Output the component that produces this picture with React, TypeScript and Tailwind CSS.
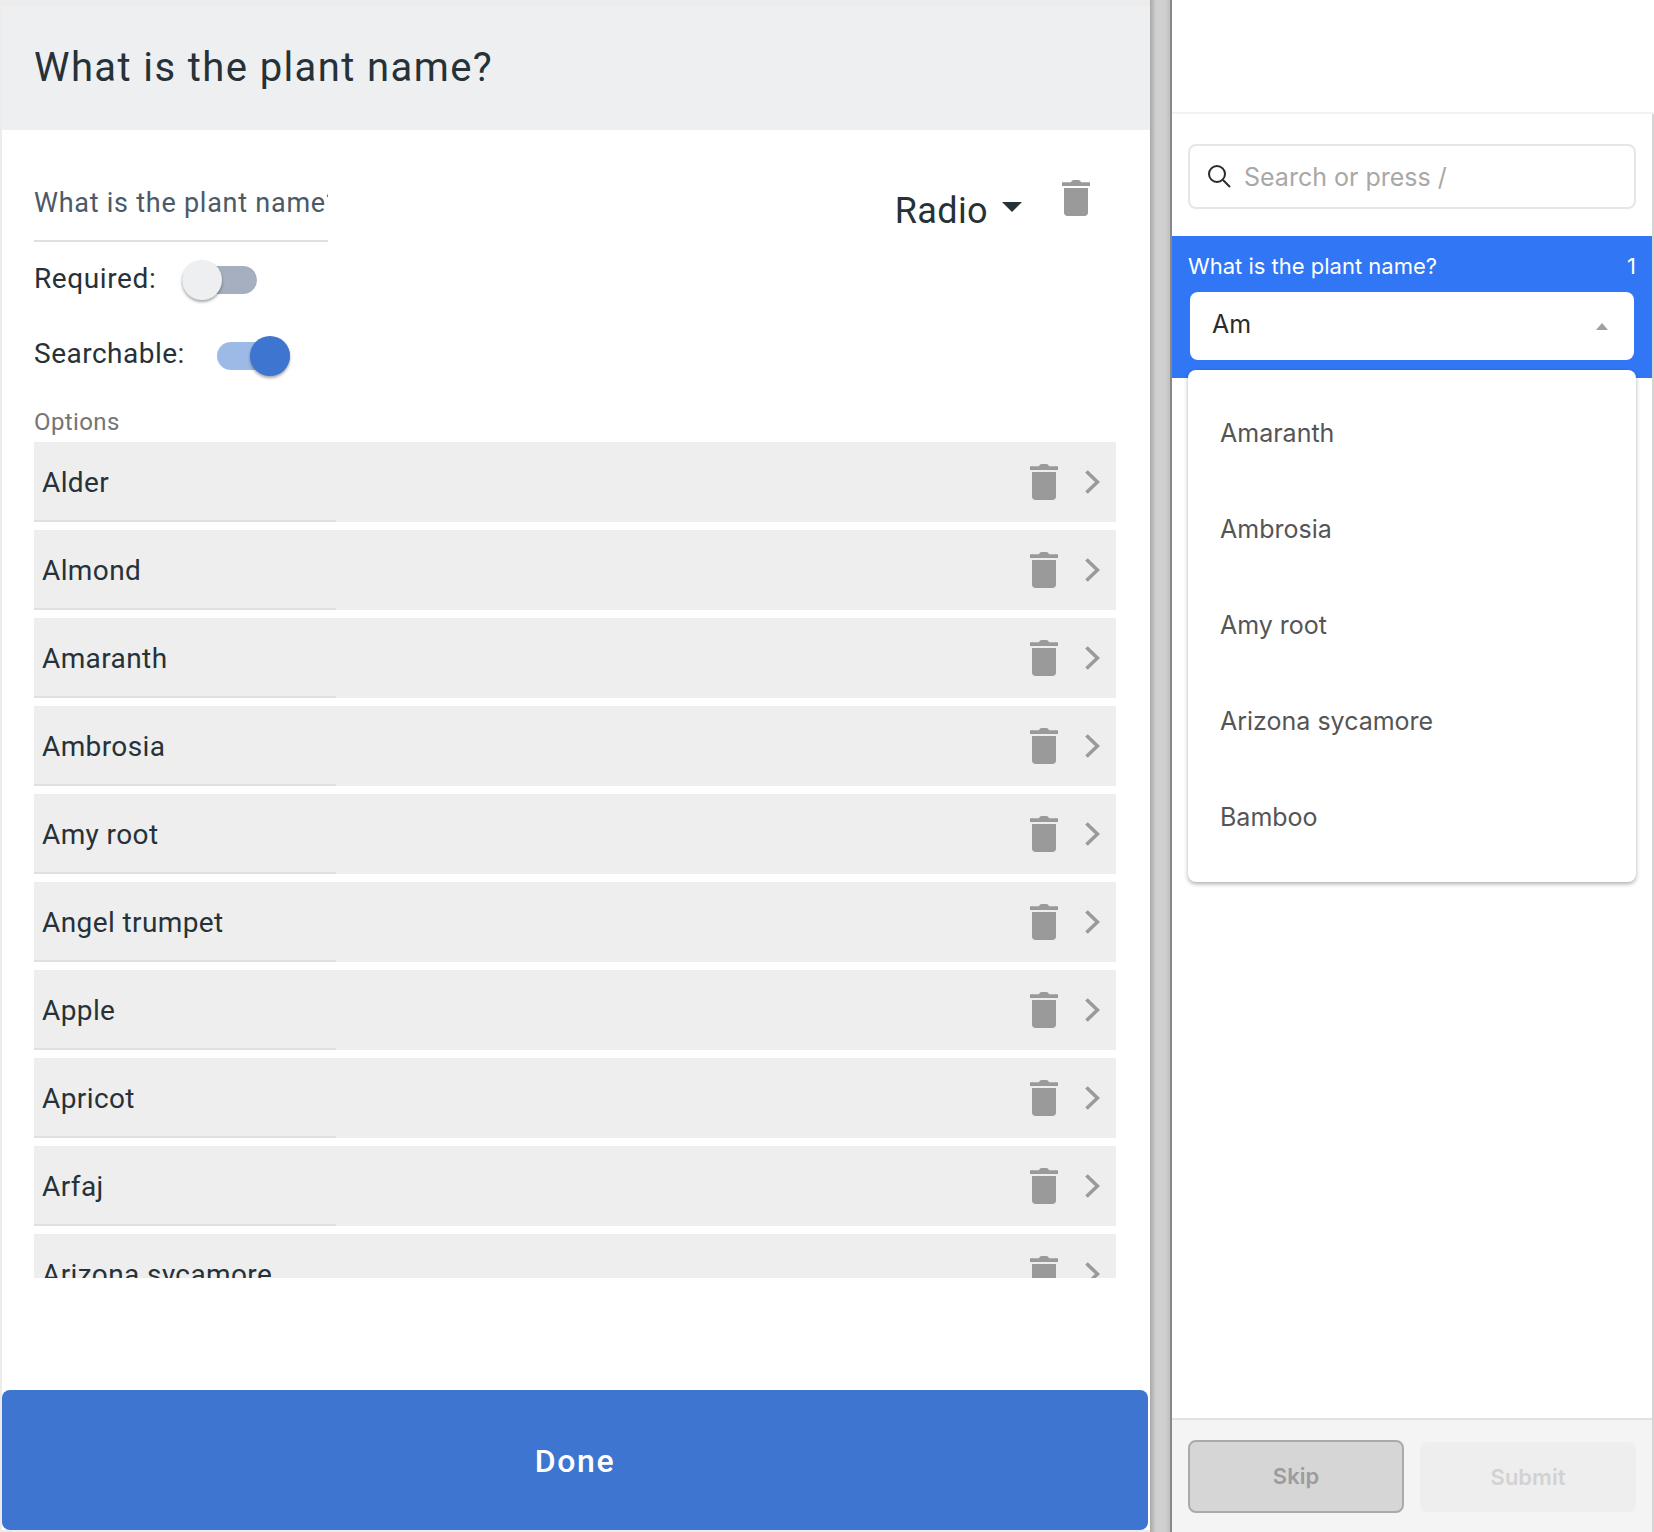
const PLEX = "font-['Roboto',sans-serif]"

const OPTIONS = [
  'Alder',
  'Almond',
  'Amaranth',
  'Ambrosia',
  'Amy root',
  'Angel trumpet',
  'Apple',
  'Apricot',
  'Arfaj',
  'Arizona sycamore',
]

const MATCHES = ['Amaranth', 'Ambrosia', 'Amy root', 'Arizona sycamore', 'Bamboo']

function Trash({ className }: { className: string }) {
  return (
    <svg viewBox="0 0 28 36" className={className} fill="#9a9a9a">
      <path d="M9 2.200C9.500 .8 10.500 0 12 0h4c1.500 0 2.500 .8 3 2.200h9V6H0V2.200z" />
      <path d="M2 8h24v24.500c0 2-1.500 3.500-3.500 3.500h-17C3.500 36 2 34.500 2 32.500z" />
    </svg>
  )
}

function Chevron() {
  return (
    <svg viewBox="0 0 15 24" className="h-6 w-[15px]" fill="none" stroke="#9a9a9a" strokeWidth="3.6">
      <path d="M1.500 1.500 12.500 12 1.500 22.500" />
    </svg>
  )
}

function Toggle({ on }: { on: boolean }) {
  return (
    <div className={`relative h-7 ${on ? 'w-[73px]' : 'w-[75px]'}`}>
      <div className={`h-7 w-full rounded-full ${on ? 'bg-[#9dbae6]' : 'bg-[#a5afbf]'}`} />
      <div
        className={`absolute top-[-6px] size-10 rounded-full shadow-[0_2px_3px_rgba(0,0,0,0.35)] ${
          on ? 'right-0 bg-[#3d75d0]' : 'left-0 bg-[#eeeff1]'
        }`}
      />
    </div>
  )
}

function OptionRow({ name }: { name: string }) {
  return (
    <div className="relative flex h-20 shrink-0 items-center bg-[#eeeeee] pl-[8px]">
      <span className="relative top-[1px] text-[28px] tracking-[0.4px] text-[#263238]">{name}</span>
      <div className="ml-auto flex items-center gap-[27px] pr-[16px]">
        <Trash className="h-9 w-7" />
        <Chevron />
      </div>
      <div className="absolute bottom-0 left-0 h-[2px] w-[302px] bg-[#e0e0e0]" />
    </div>
  )
}

function Editor() {
  return (
    <div className={`flex h-full w-[1150px] flex-col border-t-[6px] border-b-2 border-l-2 border-[#ececec] bg-white ${PLEX}`}>
      <div className="flex h-[124px] shrink-0 items-center bg-[#eeeff1] pl-[32px]">
        <h1 className="text-[40px] tracking-[1.4px] text-[#263238]">What is the plant name?</h1>
      </div>

      <div className="relative flex h-[312px] shrink-0 flex-col pl-[32px]">
        <input
          readOnly
          value="What is the plant name?"
          className="mt-[48px] h-[64px] w-[294px] border-b-2 border-[#e0e0e0] pb-[12px] text-[27px] tracking-[0.75px] text-[#4b5a66] outline-none"
        />
        <div className="mt-[18px] flex h-10 items-center gap-[26px]">
          <span className="relative top-[-1px] text-[28px] tracking-[0.6px] text-[#263238]">Required:</span>
          <Toggle on={false} />
        </div>
        <div className="mt-[36px] flex h-10 items-center gap-[32px]">
          <span className="relative top-[-2px] text-[28px] tracking-[0.5px] text-[#263238]">Searchable:</span>
          <Toggle on />
        </div>
        <span className="mt-[28px] text-[24px] tracking-[0.4px] text-[#757575]">Options</span>

        {/* Type picker */}
        <div className="absolute top-[50px] right-[60px] flex items-start gap-[40px]">
          <div className="flex items-center gap-[14px] pt-[4px]">
            <span className="text-[36px] tracking-[0.4px] text-[#263238]">Radio</span>
            <div className="mb-[8px] h-0 w-0 border-x-[10px] border-t-[10px] border-x-transparent border-t-[#263238]" />
          </div>
          <Trash className="h-9 w-7" />
        </div>
      </div>

      <div className="mr-[34px] ml-[32px] flex h-[836px] shrink-0 flex-col gap-2 overflow-hidden">
        {OPTIONS.map((name) => (
          <OptionRow key={name} name={name} />
        ))}
      </div>

      <div className="mt-auto mr-[2px] flex h-[140px] items-center justify-center rounded-lg bg-[#3d75d0]">
        <span className="relative top-[1px] text-[32px] font-medium tracking-[1.6px] text-white">Done</span>
      </div>
    </div>
  )
}

function Preview() {
  return (
    <div className="relative flex h-full flex-1 flex-col bg-white font-['Inter',sans-serif]">
      <div className="h-[114px] shrink-0 border-b-2 border-[#f2f2f2]" />

      <div className="flex flex-1 flex-col border-r-2 border-[#d4d4d4]">
        <div className="mx-[16px] mt-[30px] flex h-[65px] shrink-0 items-center rounded-lg border-2 border-[#e6e6e6] pb-[2px] pl-[17px]">
          <svg viewBox="0 0 24 24" className="size-6" fill="none" stroke="#2b2b2b" strokeWidth="2">
            <circle cx="10" cy="10" r="8" />
            <path d="m16 16 7 7" />
          </svg>
          <span className="relative top-[2px] ml-[13px] text-[25px] text-[#a8a8a8]">Search or press /</span>
        </div>

        <div className="mt-[27px] h-[142px] shrink-0 bg-[#3076f5] px-[16px] pt-[14px]">
          <div className="flex items-center justify-between text-[22px] text-white">
            <span>What is the plant name?</span>
            <span>1</span>
          </div>
          <div className="mx-[2px] mt-[9px] flex h-[68px] items-center justify-between rounded-lg bg-white pr-[26px] pl-[22px]">
            <span className="relative top-[-1px] text-[25px] text-[#2b2b2b]">Am</span>
            <div className="h-0 w-0 border-x-[6px] border-b-[7px] border-x-transparent border-b-[#a0a0a0]" />
          </div>
        </div>

        <div className="mt-auto flex h-[114px] shrink-0 gap-[16px] border-t-2 border-[#e2e2e2] bg-[#f4f4f4] px-[16px] pt-[20px]">
          <div className="flex h-[73px] w-[216px] items-center justify-center rounded-lg border-2 border-[#aaaaaa] bg-[#d6d6d6] text-[22px] font-semibold text-[#9c9c9c]">
            Skip
          </div>
          <div className="mt-[2px] flex h-[70px] w-[216px] items-center justify-center rounded-lg bg-[#eeeeee] text-[22px] font-semibold text-[#d2d2d2]">
            Submit
          </div>
        </div>
      </div>

      {/* Open dropdown, hangs over the blue question header */}
      <div className="absolute top-[370px] right-[18px] left-[16px] flex h-[512px] flex-col rounded-lg bg-white pt-[16px] pl-[32px] shadow-[0_2px_4px_rgba(0,0,0,0.32)]">
        {MATCHES.map((name) => (
          <div key={name} className="flex h-[96px] shrink-0 items-center text-[25px] text-[#555555]">
            {name}
          </div>
        ))}
      </div>
    </div>
  )
}

export default function App() {
  return (
    <div className="flex h-[1532px] w-[1654px] overflow-hidden bg-white">
      <Editor />
      {/* Split handle */}
      <div className="h-full w-[22px] shrink-0 border-r-2 border-[#888888] bg-[linear-gradient(90deg,#a8a8a8,#d0d0d0_30%,#d0d0d0_75%,#c0c0c0)]" />
      <Preview />
    </div>
  )
}
